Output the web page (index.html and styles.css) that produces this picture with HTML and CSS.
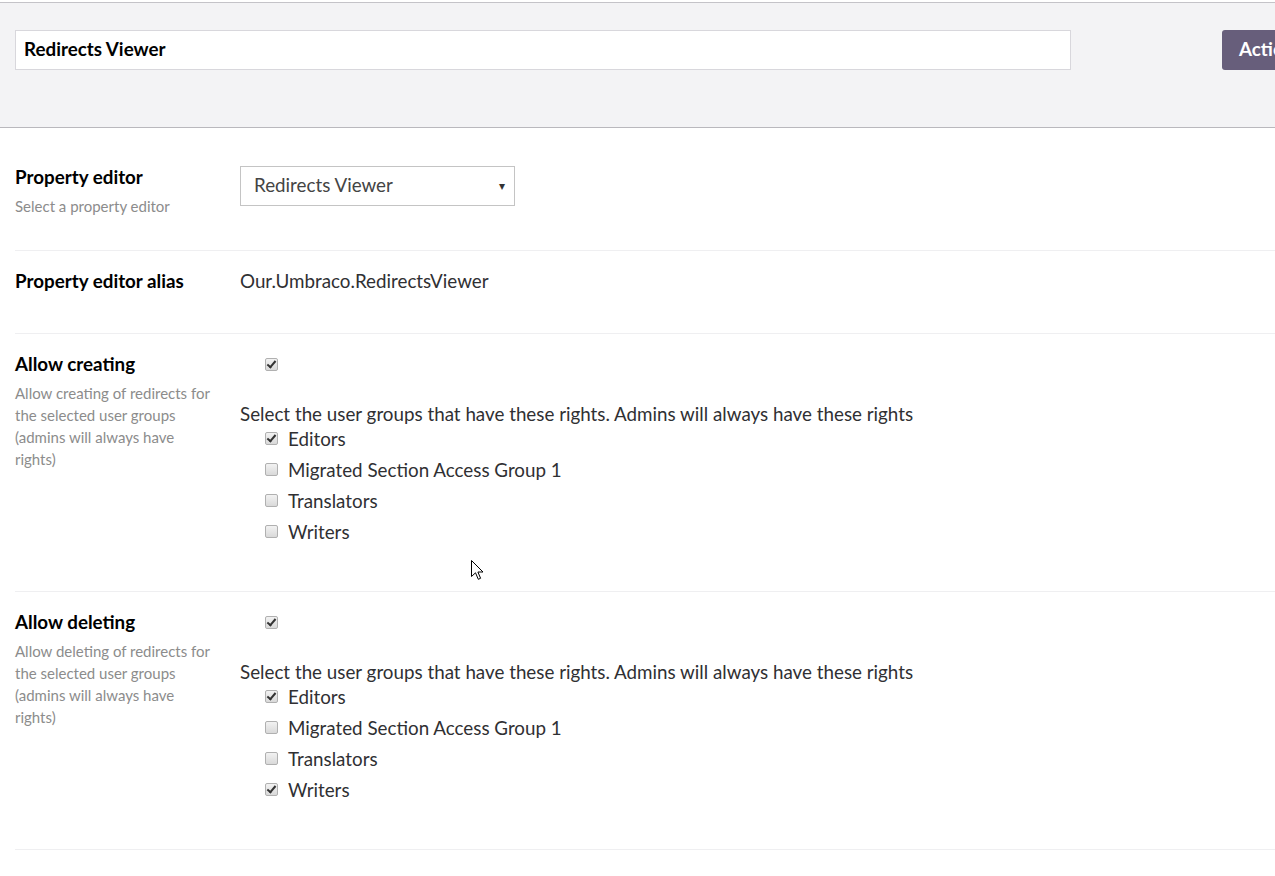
FILE: index.html
```html
<!DOCTYPE html>
<html>
<head>
<meta charset="utf-8">
<link rel="stylesheet" href="styles.css">
</head>
<body>
<div class="header">
  <div class="name-input">Redirects Viewer</div>
  <div class="btn-actions">Actions</div>
</div>
<div class="content">
  <div class="row row-first">
    <div class="label-col">
      <div class="label">Property editor</div>
      <div class="desc">Select a property editor</div>
    </div>
    <div class="value-col">
      <div class="select">Redirects Viewer<span class="caret">&#9662;</span></div>
    </div>
  </div>
  <div class="row">
    <div class="label-col">
      <div class="label">Property editor alias</div>
    </div>
    <div class="value-col">
      <div class="value-text">Our.Umbraco.RedirectsViewer</div>
    </div>
  </div>
  <div class="row">
    <div class="label-col">
      <div class="label">Allow creating</div>
      <div class="desc">Allow creating of redirects for the selected user groups (admins will always have rights)</div>
    </div>
    <div class="value-col">
      <div class="main-check"><span class="cb checked"></span></div>
      <div class="groups-text">Select the user groups that have these rights. Admins will always have these rights</div>
      <ul class="group-list">
        <li><span class="cb checked"></span>Editors</li>
        <li><span class="cb"></span>Migrated Section Access Group 1</li>
        <li><span class="cb"></span>Translators</li>
        <li><span class="cb"></span>Writers</li>
      </ul>
    </div>
  </div>
  <div class="row">
    <div class="label-col">
      <div class="label">Allow deleting</div>
      <div class="desc">Allow deleting of redirects for the selected user groups (admins will always have rights)</div>
    </div>
    <div class="value-col">
      <div class="main-check"><span class="cb checked"></span></div>
      <div class="groups-text">Select the user groups that have these rights. Admins will always have these rights</div>
      <ul class="group-list">
        <li><span class="cb checked"></span>Editors</li>
        <li><span class="cb"></span>Migrated Section Access Group 1</li>
        <li><span class="cb"></span>Translators</li>
        <li><span class="cb checked"></span>Writers</li>
      </ul>
    </div>
  </div>
</div>
<svg class="cursor" width="13" height="21" viewBox="0 0 13 21"><path d="M0.5 0.5 L0.5 16.5 L4.5 12.8 L7.3 19.3 L9.6 18.3 L6.9 12 L12 12 Z" fill="#fff" stroke="#000" stroke-width="1" stroke-linejoin="miter"/></svg>
</body>
</html>
```

FILE: styles.css
```css
html, body {
  margin: 0;
  padding: 0;
  background: #fff;
}
body {
  font-family: Lato, "Open Sans", sans-serif;
  color: #303033;
  position: relative;
  width: 1275px;
  height: 876px;
  overflow: hidden;
}
.header {
  margin-top: 2px;
  border-top: 1px solid #c4c3c8;
  border-bottom: 1px solid #b9b8bd;
  background: #f3f3f5;
  box-sizing: border-box;
  height: 126px;
  padding: 27px 0 0 15px;
  display: flex;
  align-items: flex-start;
  overflow: hidden;
}
.name-input {
  width: 1056px;
  height: 40px;
  box-sizing: border-box;
  border: 1px solid #d8d7dc;
  background: #fff;
  padding: 0 8px;
  font-size: 18.8px;
  font-weight: 700;
  color: #000;
  line-height: 36px;
  flex-shrink: 0;
}
.btn-actions {
  margin-left: 151px;
  flex-shrink: 0;
  width: 100px;
  height: 40px;
  box-sizing: border-box;
  background: #675e7b;
  border-radius: 3px;
  color: #fff;
  font-weight: 700;
  font-size: 18.8px;
  line-height: 38px;
  padding-left: 17px;
  white-space: nowrap;
}
.content {
  padding-left: 15px;
}
.row {
  display: flex;
  border-bottom: 1px solid #efeff1;
  padding: 19px 0 41px;
}
.row-first {
  padding-top: 38px;
  padding-bottom: 33px;
}
.label-col {
  width: 225px;
  flex-shrink: 0;
}
.label {
  font-size: 18.8px;
  font-weight: 700;
  color: #000;
  line-height: 22px;
}
.desc {
  margin-top: 7px;
  font-size: 15px;
  line-height: 22px;
  color: #8c8c8c;
  width: 200px;
}
.value-col {
  flex: 1;
}
.select {
  width: 275px;
  height: 40px;
  box-sizing: border-box;
  border: 1px solid #c4c4c4;
  background: #fff;
  padding-left: 13px;
  font-size: 18.8px;
  line-height: 35px;
  color: #444;
  position: relative;
}
.caret {
  position: absolute;
  right: 9px;
  top: 1px;
  font-size: 12px;
  color: #333;
}
.value-text {
  font-size: 18.8px;
  line-height: 22px;
  color: #303033;
}
.main-check {
  height: 22px;
  display: flex;
  align-items: center;
  padding-left: 25px;
}
.groups-text {
  margin-top: 28px;
  font-size: 18.8px;
  line-height: 22px;
  color: #303033;
}
.group-list {
  list-style: none;
  margin: -2px 0 3px;
  padding: 0 0 0 25px;
}
.group-list li {
  height: 31px;
  display: flex;
  align-items: center;
  font-size: 18.8px;
  color: #303033;
}
.group-list .cb {
  margin-right: 10px;
}
.cb {
  display: inline-block;
  width: 13px;
  height: 13px;
  box-sizing: border-box;
  border: 1px solid #b0b0b0;
  border-radius: 2px;
  background: linear-gradient(#f2f2f2, #d9d9d9);
  flex-shrink: 0;
  position: relative;
}
.cb.checked::after {
  content: "";
  position: absolute;
  left: 3px;
  top: 0px;
  width: 3px;
  height: 7px;
  border-right: 2px solid #333;
  border-bottom: 2px solid #333;
  transform: rotate(40deg);
}
.cursor {
  position: absolute;
  left: 471px;
  top: 560px;
}
```
